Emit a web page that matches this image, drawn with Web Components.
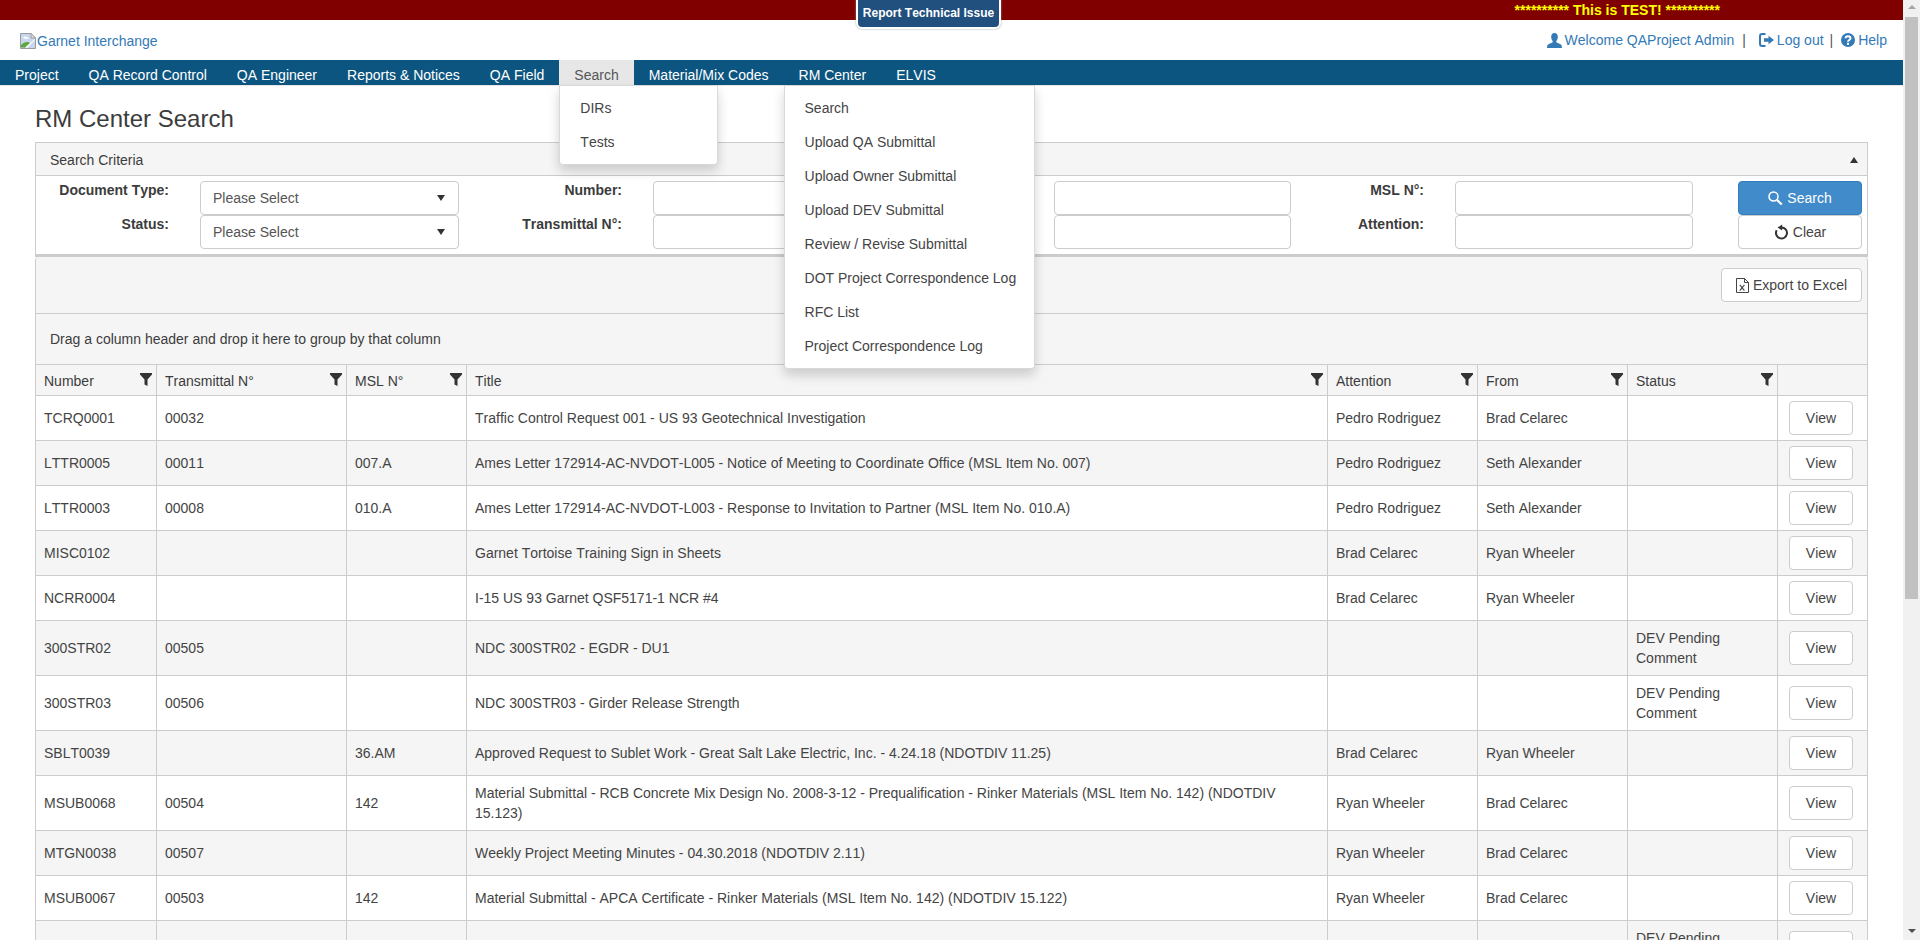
<!DOCTYPE html>
<html>
<head>
<meta charset="utf-8">
<title>RM Center Search</title>
<style>
    html, body { margin: 0; height: 940px; overflow: hidden; background: #fff; }
    body { display: flex; font: 14px/20px "Liberation Sans", Arial, sans-serif; font-kerning: none; color: #3c3c3c; }
    #page { width: 1903px; height: 940px; overflow: hidden; flex: none; }
</style>
</head>
<body>
<div id="page">
    <gi-topbar></gi-topbar>
    <gi-header></gi-header>
    <gi-nav>
        <gi-nav-item label="Project"></gi-nav-item>
        <gi-nav-item label="QA Record Control"></gi-nav-item>
        <gi-nav-item label="QA Engineer"></gi-nav-item>
        <gi-nav-item label="Reports &amp; Notices"></gi-nav-item>
        <gi-nav-item label="QA Field"></gi-nav-item>
        <gi-nav-item label="Search" active>
            <gi-dropdown style="width:159px">
                <a>DIRs</a>
                <a>Tests</a>
            </gi-dropdown>
        </gi-nav-item>
        <gi-nav-item label="Material/Mix Codes"></gi-nav-item>
        <gi-nav-item label="RM Center">
            <gi-dropdown style="width:251px">
                <a>Search</a>
                <a>Upload QA Submittal</a>
                <a>Upload Owner Submittal</a>
                <a>Upload DEV Submittal</a>
                <a>Review / Revise Submittal</a>
                <a>DOT Project Correspondence Log</a>
                <a>RFC List</a>
                <a>Project Correspondence Log</a>
            </gi-dropdown>
        </gi-nav-item>
        <gi-nav-item label="ELVIS"></gi-nav-item>
    </gi-nav>
    <gi-search-page></gi-search-page>
</div>
<gi-scrollbar></gi-scrollbar>

<script>
const ICONS = {
    user: '<svg width="15" height="15" viewBox="0 0 15 15"><path fill="currentColor" d="M7.5 0C5.4 0 4.2 1.6 4.2 3.8c0 1.700.6 3.300 1.500 4.200v1.300C3.800 10.300.8 11 .3 12.600L0 15h15l-.3-2.400C14.200 11 11.200 10.300 9.300 9.300V8c.9-.9 1.500-2.500 1.500-4.200C10.800 1.600 9.600 0 7.500 0z"/></svg>',
    logout: '<svg width="15" height="14" viewBox="0 0 15 14"><path fill="currentColor" d="M6.500 0H3.200A3.200 3.200 0 0 0 0 3.200v7.600A3.200 3.200 0 0 0 3.200 14h3.300v-2H3.200A1.200 1.200 0 0 1 2 10.800V3.200A1.200 1.200 0 0 1 3.200 2h3.300zM5 5.300h4.500V2.800L15 7l-5.500 4.200V8.700H5z"/></svg>',
    help: '<svg width="14" height="14" viewBox="0 0 14 14"><circle cx="7" cy="7" r="7" fill="currentColor"/><path fill="none" stroke="#fff" stroke-width="2" d="M4.500 5.300C4.600 3.900 5.600 3.200 7 3.200s2.500.8 2.500 2c0 1.800-2.500 1.800-2.500 3.600"/><rect x="6" y="9.800" width="2" height="2" fill="#fff"/></svg>',
    search: '<svg width="15" height="14" viewBox="0 0 15 14"><circle cx="5.500" cy="5.500" r="4.500" fill="none" stroke="currentColor" stroke-width="1.500"/><path stroke="currentColor" stroke-width="2.200" d="M9 9l4.800 4.500"/></svg>',
    clear: '<svg width="15" height="16" viewBox="0 0 15 16"><path fill="none" stroke="#333" stroke-width="2" d="M7.500 3.500A5.500 5.500 0 1 1 2.700 6.300"/><path fill="#333" d="M8.200 .5v6L3.500 3.500z"/></svg>',
    excel: '<svg width="13" height="15" viewBox="0 0 13 15"><path fill="#fff" stroke="currentColor" d="M.5.500h8l4 4v10H.5z"/><path fill="none" stroke="currentColor" d="M8.500.500v4h4"/><path stroke="currentColor" stroke-width="1.100" d="M3.800 6.800l4.600 5.800M8.400 6.800l-4.600 5.800"/></svg>',
    filter: '<svg width="12" height="13" viewBox="0 0 12 13"><path fill="#333" d="M0 0h12v1.500L7.500 6.500V13L4.500 11.500v-5L0 1.500z"/></svg>',
    broken: '<svg width="16" height="16" viewBox="0 0 16 16"><path fill="#c9d7ee" stroke="#9a9a9a" d="M.5.500h10.500l4.500 4.500v10.500H.5z"/><path fill="#fff" d="M3 5c1-1.500 2.500-1.800 3.500-1 1 0 2 .7 2.500 1.500-1.500.5-4.500.5-6-.5z"/><path fill="#5da83c" d="M1 14.500V12c2-2.500 5-3.500 7-3 1 .2 1.500.6 2 1l-4 4.500z"/><path fill="#fff" d="M15 6v1l-8 8H6l-.5-1z"/><path fill="#e8e8e8" stroke="#9a9a9a" d="M11 .5v4.500h4.500z"/></svg>'
};

class Topbar extends HTMLElement {
    constructor() {
        super();
        this.attachShadow({mode: 'open'});
        this.shadowRoot.innerHTML = `
            <style>
                :host {
                    display: flex;
                    justify-content: flex-end;
                    height: 20px;
                    padding-right: 183px;
                    background: #800000;
                    color: #ff0;
                    font-weight: bold;
                    line-height: 20px;
                    position: relative;
                    z-index: 50;
                }
                #report {
                    position: absolute;
                    top: -2px;
                    left: 856px;
                    box-sizing: border-box;
                    width: 145px;
                    height: 31px;
                    padding-top: 5px;
                    background: #214f7e;
                    border: 2px solid #fff;
                    border-radius: 0 0 6px 6px;
                    box-shadow: 0 0 2px #999;
                    color: #fff;
                    font-size: 12px;
                    line-height: 16px;
                    text-align: center;
                    white-space: nowrap;
                }
            </style>
            <div id="report">Report Technical Issue</div>
            <span>********** This is TEST! **********</span>
        `;
    }
}

class Header extends HTMLElement {
    constructor() {
        super();
        this.attachShadow({mode: 'open'});
        this.shadowRoot.innerHTML = `
            <style>
                :host {
                    display: flex;
                    justify-content: space-between;
                    align-items: center;
                    height: 40px;
                    padding: 0 16px 0 20px;
                    color: #337ab7;
                }
                #logo { display: flex; align-items: center; margin-top: 2px; }
                #logo svg { margin-right: 1px; }
                #user { display: flex; align-items: center; }
                svg { display: block; flex: none; }
                .icon { margin-right: 3px; }
                .sep { color: #555; margin: 0 13px 0 8px; }
                .sep.tight { margin: 0 8px 0 6px; }
            </style>
            <div id="logo">${ICONS.broken}<span>Garnet Interchange</span></div>
            <div id="user">
                <span class="icon">${ICONS.user}</span><span>Welcome QAProject Admin</span>
                <span class="sep">|</span>
                <span class="icon">${ICONS.logout}</span><span>Log out</span>
                <span class="sep tight">|</span>
                <span class="icon">${ICONS.help}</span><span>Help</span>
            </div>
        `;
    }
}

class Nav extends HTMLElement {
    constructor() {
        super();
        this.attachShadow({mode: 'open'});
        this.shadowRoot.innerHTML = `
            <style>
                :host {
                    display: flex;
                    height: 25px;
                    background: #0c5580;
                    border-bottom: 1px solid #e7e7e7;
                    position: relative;
                    z-index: 40;
                }
            </style>
            <slot></slot>
        `;
    }
}

class NavItem extends HTMLElement {
    constructor() {
        super();
        this.attachShadow({mode: 'open'});
        this.shadowRoot.innerHTML = `
            <style>
                :host {
                    display: block;
                    position: relative;
                    height: 25px;
                    color: #fff;
                }
                :host([active]) { background: #e7e7e7; color: #555; }
                #label { display: block; padding: 5px 15px 0; white-space: nowrap; }
            </style>
            <span id="label">${this.getAttribute('label')}</span>
            <slot></slot>
        `;
    }
}

class Dropdown extends HTMLElement {
    constructor() {
        super();
        this.attachShadow({mode: 'open'});
        this.shadowRoot.innerHTML = `
            <style>
                :host {
                    display: block;
                    position: absolute;
                    top: 25px;
                    left: 0;
                    box-sizing: border-box;
                    padding: 5px 0;
                    background: #fff;
                    border: 1px solid rgba(0, 0, 0, .15);
                    border-radius: 0 0 4px 4px;
                    box-shadow: 0 6px 12px rgba(0, 0, 0, .175);
                    color: #444;
                }
                ::slotted(a) {
                    display: block;
                    padding: 7px 20px;
                    line-height: 20px;
                    white-space: nowrap;
                }
            </style>
            <slot></slot>
        `;
    }
}

class Button extends HTMLElement {
    constructor() {
        super();
        this.attachShadow({mode: 'open'});
        this.shadowRoot.innerHTML = `
            <style>
                :host {
                    display: flex;
                    justify-content: center;
                    align-items: center;
                    gap: 4px;
                    box-sizing: border-box;
                    height: 34px;
                    background: #fff;
                    border: 1px solid #ccc;
                    border-radius: 4px;
                    color: #444;
                }
                :host([primary]) { background: #428bca; border-color: #357ebd; color: #fff; }
                svg { display: block; }
            </style>
            ${ICONS[this.getAttribute('icon')] || ''}<slot></slot>
        `;
    }
}

class Select extends HTMLElement {
    constructor() {
        super();
        this.attachShadow({mode: 'open'});
        this.shadowRoot.innerHTML = `
            <style>
                :host {
                    display: flex;
                    justify-content: space-between;
                    align-items: center;
                    box-sizing: border-box;
                    height: 34px;
                    padding: 0 13px 0 12px;
                    background: #fff;
                    border: 1px solid #ccc;
                    border-radius: 4px;
                    color: #555;
                }
                #arrow {
                    border: 4px solid transparent;
                    border-top: 6px solid #333;
                    border-bottom: 0;
                }
            </style>
            <slot></slot><span id="arrow"></span>
        `;
    }
}

class SearchForm extends HTMLElement {
    constructor() {
        super();
        this.attachShadow({mode: 'open'});
        this.shadowRoot.innerHTML = `
            <style>
                :host {
                    display: grid;
                    grid-template-columns: 164px 259px 194px 237px 164px 237px 164px 238px 45px 124px;
                    grid-auto-rows: 34px;
                    padding: 5px 0;
                }
                label {
                    padding: 1px 31px 0 0;
                    font-weight: bold;
                    line-height: 16px;
                    text-align: right;
                    white-space: nowrap;
                }
                input {
                    box-sizing: border-box;
                    width: 100%;
                    height: 34px;
                    margin: 0;
                    background: #fff;
                    border: 1px solid #ccc;
                    border-radius: 4px;
                }
            </style>
            <label>Document Type:</label>
            <gi-select>Please Select</gi-select>
            <label>Number:</label>
            <input>
            <label></label>
            <input>
            <label>MSL N°:</label>
            <input>
            <span></span>
            <gi-button primary icon="search">Search</gi-button>

            <label>Status:</label>
            <gi-select>Please Select</gi-select>
            <label>Transmittal N°:</label>
            <input>
            <label></label>
            <input>
            <label>Attention:</label>
            <input>
            <span></span>
            <gi-button icon="clear">Clear</gi-button>
        `;
    }
}

const GRID_COLUMNS = [
    {title: 'Number', width: 121},
    {title: 'Transmittal N°', width: 190},
    {title: 'MSL N°', width: 120},
    {title: 'Title', width: 861},
    {title: 'Attention', width: 150},
    {title: 'From', width: 150},
    {title: 'Status', width: 150}
];

const GRID_ROWS = [
    ['TCRQ0001', '00032', '', 'Traffic Control Request 001 - US 93 Geotechnical Investigation', 'Pedro Rodriguez', 'Brad Celarec', ''],
    ['LTTR0005', '00011', '007.A', 'Ames Letter 172914-AC-NVDOT-L005 - Notice of Meeting to Coordinate Office (MSL Item No. 007)', 'Pedro Rodriguez', 'Seth Alexander', ''],
    ['LTTR0003', '00008', '010.A', 'Ames Letter 172914-AC-NVDOT-L003 - Response to Invitation to Partner (MSL Item No. 010.A)', 'Pedro Rodriguez', 'Seth Alexander', ''],
    ['MISC0102', '', '', 'Garnet Tortoise Training Sign in Sheets', 'Brad Celarec', 'Ryan Wheeler', ''],
    ['NCRR0004', '', '', 'I-15 US 93 Garnet QSF5171-1 NCR #4', 'Brad Celarec', 'Ryan Wheeler', ''],
    ['300STR02', '00505', '', 'NDC 300STR02 - EGDR - DU1', '', '', 'DEV Pending Comment'],
    ['300STR03', '00506', '', 'NDC 300STR03 - Girder Release Strength', '', '', 'DEV Pending Comment'],
    ['SBLT0039', '', '36.AM', 'Approved Request to Sublet Work - Great Salt Lake Electric, Inc. - 4.24.18 (NDOTDIV 11.25)', 'Brad Celarec', 'Ryan Wheeler', ''],
    ['MSUB0068', '00504', '142', 'Material Submittal - RCB Concrete Mix Design No. 2008-3-12 - Prequalification - Rinker Materials (MSL Item No. 142) (NDOTDIV 15.123)', 'Ryan Wheeler', 'Brad Celarec', ''],
    ['MTGN0038', '00507', '', 'Weekly Project Meeting Minutes - 04.30.2018 (NDOTDIV 2.11)', 'Ryan Wheeler', 'Brad Celarec', ''],
    ['MSUB0067', '00503', '142', 'Material Submittal - APCA Certificate - Rinker Materials (MSL Item No. 142) (NDOTDIV 15.122)', 'Ryan Wheeler', 'Brad Celarec', ''],
    ['', '', '', '', '', '', 'DEV Pending Comment']
];

class Grid extends HTMLElement {
    constructor() {
        super();
        this.attachShadow({mode: 'open'});
        const head = GRID_COLUMNS.map(c =>
            `<th style="width:${c.width}px"><div><span>${c.title}</span>${ICONS.filter}</div></th>`).join('');
        const rows = GRID_ROWS.map(r =>
            `<tr>${r.map(v => `<td>${v}</td>`).join('')}<td class="act"><gi-button>View</gi-button></td></tr>`).join('');
        this.shadowRoot.innerHTML = `
            <style>
                :host { display: block; }
                #toolbar {
                    display: flex;
                    justify-content: flex-end;
                    height: 57px;
                    padding: 11px 5px 0 0;
                    box-sizing: border-box;
                    border-bottom: 1px solid #ccc;
                }
                #toolbar gi-button { width: 141px; }
                #group {
                    box-sizing: border-box;
                    height: 51px;
                    padding: 15px 14px 0;
                    border-bottom: 1px solid #ccc;
                }
                table {
                    width: 1831px;
                    table-layout: fixed;
                    border-collapse: separate;
                    border-spacing: 0;
                    background: #fff;
                }
                th, td {
                    box-sizing: border-box;
                    border-right: 1px solid #ccc;
                    border-bottom: 1px solid #ccc;
                    font-weight: normal;
                    text-align: left;
                }
                th:last-child, td:last-child { border-right: 0; }
                th {
                    height: 31px;
                    padding: 0 4px 0 8px;
                    background: #f5f5f5;
                }
                th div { display: flex; justify-content: space-between; align-items: center; }
                th span { padding-top: 2px; }
                th svg { flex: none; margin-top: -1px; }
                td { height: 45px; padding: 7px 8px; color: #444; }
                tr:nth-child(even) td { background: #f5f5f5; }
                td.act { padding: 5px 14px 5px 11px; }
            </style>
            <div id="toolbar"><gi-button icon="excel">Export to Excel</gi-button></div>
            <div id="group">Drag a column header and drop it here to group by that column</div>
            <table>
                <thead><tr>${head}<th></th></tr></thead>
                <tbody>${rows}</tbody>
            </table>
        `;
    }
}

class SearchPage extends HTMLElement {
    constructor() {
        super();
        this.attachShadow({mode: 'open'});
        this.shadowRoot.innerHTML = `
            <style>
                :host { display: block; padding: 0 35px; }
                h1 {
                    margin: 0;
                    padding: 20px 0 10px;
                    font-size: 24px;
                    font-weight: normal;
                    line-height: 26px;
                }
                #criteria {
                    border: 1px solid #ccc;
                    border-bottom: 0;
                }
                #title {
                    display: flex;
                    justify-content: space-between;
                    align-items: center;
                    box-sizing: border-box;
                    height: 33px;
                    padding: 1px 9px 0 14px;
                    background: #f5f5f5;
                    border-bottom: 1px solid #ccc;
                }
                #caret {
                    border: 4px solid transparent;
                    border-bottom: 6px solid #333;
                    border-top: 0;
                }
                #splitter { height: 3px; background: #ccc; }
                #results {
                    background: #f5f5f5;
                    border: 1px solid #ccc;
                    border-top: 0;
                    border-radius: 4px 4px 0 0;
                }
            </style>
            <h1>RM Center Search</h1>
            <div id="criteria">
                <div id="title"><span>Search Criteria</span><span id="caret"></span></div>
                <gi-search-form></gi-search-form>
                <div id="splitter"></div>
            </div>
            <div id="results"><gi-grid></gi-grid></div>
        `;
    }
}

class Scrollbar extends HTMLElement {
    constructor() {
        super();
        this.attachShadow({mode: 'open'});
        this.shadowRoot.innerHTML = `
            <style>
                :host {
                    display: flex;
                    flex-direction: column;
                    align-items: center;
                    flex: none;
                    width: 17px;
                    height: 940px;
                    background: #f1f1f1;
                }
                #up, #down { flex: none; width: 0; border: 4px solid transparent; }
                #up { margin-top: 5px; margin-bottom: 8px; border-bottom: 4px solid #a3a3a3; border-top: 0; }
                #thumb { flex: none; width: 13px; height: 582px; background: #c1c1c1; }
                #down { margin-top: auto; margin-bottom: 7px; border-top: 4px solid #505050; border-bottom: 0; }
            </style>
            <span id="up"></span>
            <div id="thumb"></div>
            <span id="down"></span>
        `;
    }
}

customElements.define('gi-topbar', Topbar);
customElements.define('gi-header', Header);
customElements.define('gi-nav', Nav);
customElements.define('gi-nav-item', NavItem);
customElements.define('gi-dropdown', Dropdown);
customElements.define('gi-button', Button);
customElements.define('gi-select', Select);
customElements.define('gi-search-form', SearchForm);
customElements.define('gi-grid', Grid);
customElements.define('gi-search-page', SearchPage);
customElements.define('gi-scrollbar', Scrollbar);
</script>
</body>
</html>
